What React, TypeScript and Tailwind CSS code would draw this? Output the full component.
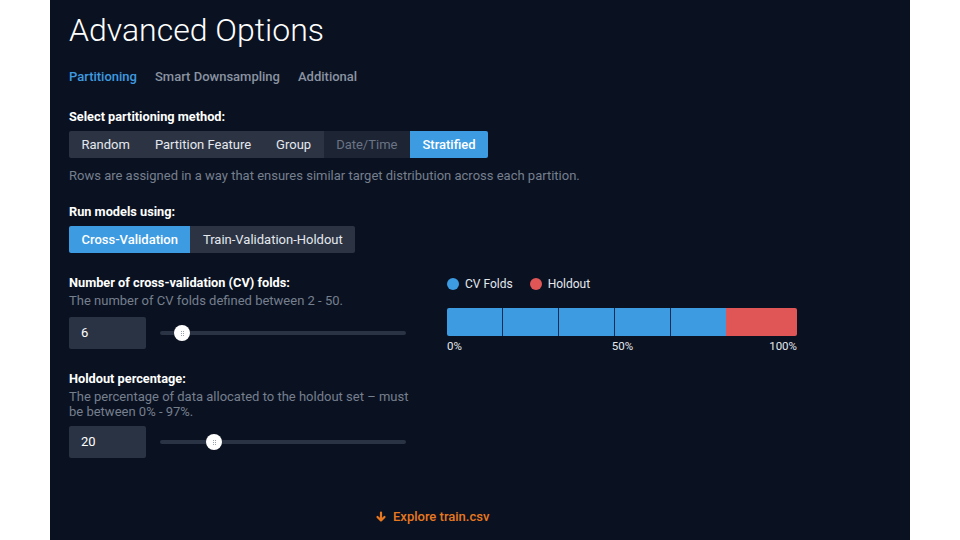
import React from 'react'

const font = { fontFamily: 'Roboto, "Liberation Sans", sans-serif' }

function Segmented({ items, active, disabled }: { items: string[]; active: string; disabled?: string }) {
  return (
    <div className="flex h-[27px] rounded-[2px] overflow-hidden w-fit">
      {items.map((it) => {
        const isActive = it === active
        const isDisabled = it === disabled
        return (
          <div
            key={it}
            className={
              'flex items-center px-[12.5px] text-[13px] ' +
              (isActive
                ? 'bg-[#3d9be2] text-white font-medium'
                : isDisabled
                ? 'bg-[#1d2534] text-[#6b7484]'
                : 'bg-[#2c3444] text-[#e4e8ee]')
            }
          >
            {it}
          </div>
        )
      })}
    </div>
  )
}

function Slider({ pos }: { pos: number }) {
  return (
    <div className="relative w-[246px] h-[4px] rounded-full bg-[#2a3343]">
      <div
        className="absolute top-1/2 -translate-y-1/2 -translate-x-1/2 w-[16px] h-[16px] rounded-full bg-white flex items-center justify-center"
        style={{ left: pos }}
      >
        <div className="grid grid-cols-2 gap-[1px]">
          {[0, 1, 2, 3, 4, 5].map((i) => (
            <div key={i} className="w-[1px] h-[1px] bg-[#9aa3b0]" />
          ))}
        </div>
      </div>
    </div>
  )
}

function NumberField({ value, pos }: { value: string; pos: number }) {
  return (
    <div className="flex items-center">
      <div className="w-[77px] h-[32px] bg-[#2a3343] rounded-[2px] flex items-center pl-[12px] text-[13px] text-white">
        {value}
      </div>
      <div className="ml-[14px]">
        <Slider pos={pos} />
      </div>
    </div>
  )
}

export default function App() {
  return (
    <div className="w-[960px] h-[540px] bg-white flex overflow-hidden" style={font}>
      <div className="ml-[50px] w-[860px] h-full bg-[#0a1221] pl-[19px] flex flex-col">
        <div className="mt-[10px] text-[32px] leading-[40px] font-light text-white">Advanced Options</div>

        <div className="mt-[17px] flex gap-[18px] text-[13px] font-medium leading-[20px]">
          <span className="text-[#3e9be0]">Partitioning</span>
          <span className="text-[#8b93a1]">Smart Downsampling</span>
          <span className="text-[#8b93a1]">Additional</span>
        </div>

        <div className="mt-[22px] text-[12.75px] font-bold text-white leading-[16px]">Select partitioning method:</div>
        <div className="mt-[6px]">
          <Segmented
            items={['Random', 'Partition Feature', 'Group', 'Date/Time', 'Stratified']}
            active="Stratified"
            disabled="Date/Time"
          />
        </div>
        <div className="mt-[10px] text-[13px] text-[#767f8e] leading-[16px]">
          Rows are assigned in a way that ensures similar target distribution across each partition.
        </div>

        <div className="mt-[20px] text-[12.75px] font-bold text-white leading-[16px]">Run models using:</div>
        <div className="mt-[6px]">
          <Segmented items={['Cross-Validation', 'Train-Validation-Holdout']} active="Cross-Validation" />
        </div>

        <div className="mt-[22px] flex">
          <div className="w-[378px]">
            <div className="text-[12.75px] font-bold text-white leading-[16px]">Number of cross-validation (CV) folds:</div>
            <div className="mt-[2px] text-[13px] text-[#767f8e] leading-[16px]">
              The number of CV folds defined between 2 - 50.
            </div>
            <div className="mt-[8px]">
              <NumberField value="6" pos={22} />
            </div>
          </div>

          <div className="w-[350px]">
            <div className="mt-[1px] flex items-center gap-[6px] text-[12px] text-[#e4e8ee] leading-[16px]">
              <span className="w-[12px] h-[12px] rounded-full bg-[#3d9be2]" />
              <span>CV Folds</span>
              <span className="ml-[11px] w-[12px] h-[12px] rounded-full bg-[#e05656]" />
              <span>Holdout</span>
            </div>
            <div className="mt-[16px] flex h-[28px] rounded-[2px] overflow-hidden">
              <div className="flex-1 bg-[#3d9be2] border-r border-[#0c2f52]" />
              <div className="flex-1 bg-[#3d9be2] border-r border-[#0c2f52]" />
              <div className="flex-1 bg-[#3d9be2] border-r border-[#0c2f52]" />
              <div className="flex-1 bg-[#3d9be2] border-r border-[#0c2f52]" />
              <div className="flex-1 bg-[#3d9be2]" />
              <div className="w-[71px] bg-[#e05656]" />
            </div>
            <div className="mt-[3px] flex justify-between text-[11.5px] text-[#e4e8ee] leading-[14px]">
              <span>0%</span>
              <span className="ml-[14px]">50%</span>
              <span>100%</span>
            </div>
          </div>
        </div>

        <div className="mt-[18px] text-[12.75px] font-bold text-white leading-[16px]">Holdout percentage:</div>
        <div className="mt-[2px] w-[345px] text-[13px] text-[#767f8e] leading-[15px]">
          The percentage of data allocated to the holdout set – must be between 0% - 97%.
        </div>
        <div className="mt-[7px]">
          <NumberField value="20" pos={54} />
        </div>

        <div className="mt-[51px] pl-[306px] flex items-center gap-[6px] text-[13px] font-medium text-[#e8781f] leading-[16px]">
          <svg width="12" height="12" viewBox="0 0 12 12" fill="none" stroke="currentColor" strokeWidth="2.2" strokeLinecap="round" strokeLinejoin="round">
            <path d="M6 1.5v8M2.5 6l3.5 3.5L9.5 6" />
          </svg>
          <span>Explore train.csv</span>
        </div>
      </div>
    </div>
  )
}
